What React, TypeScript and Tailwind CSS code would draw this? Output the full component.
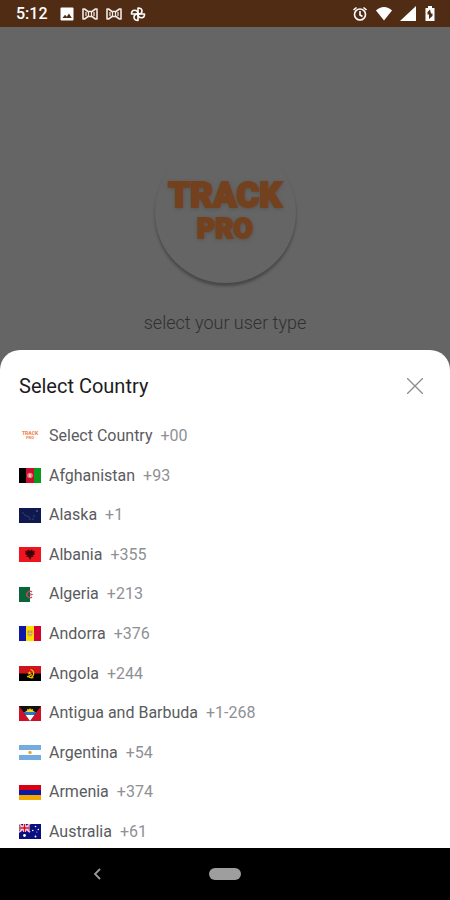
import type { ReactNode } from 'react'

interface Country {
  name: string
  code: string
  flag: ReactNode
}

const countries: Country[] = [
  {
    name: 'Select Country',
    code: '+00',
    flag: (
      <g fontFamily="Roboto, sans-serif" fontWeight="900" fill="#ef8a55" textAnchor="middle">
        <text x="11" y="6" fontSize="5">TRACK</text>
        <text x="11" y="10" fontSize="4">PRO</text>
      </g>
    ),
  },
  {
    name: 'Afghanistan',
    code: '+93',
    flag: (
      <>
        <path fill="#000" d="M0 0h8v15H0z" />
        <path fill="#c8102e" d="M7 0h8v15H7z" />
        <path fill="#0a9a1c" d="M15 0h7v15h-7z" />
        <circle cx="11" cy="7.5" r="2.8" fill="#e77b76" />
        <path d="M10 6h2v3h-2z" fill="#f4c1b8" />
      </>
    ),
  },
  {
    name: 'Alaska',
    code: '+1',
    flag: (
      <>
        <path fill="#10194f" d="M0 0h22v15H0z" />
        <g fill="#7d86a0">
          <circle cx="4" cy="5" r=".5" />
          <circle cx="6" cy="7" r=".5" />
          <circle cx="8" cy="8" r=".5" />
          <circle cx="10" cy="9" r=".5" />
          <circle cx="11" cy="11" r=".5" />
          <circle cx="14" cy="11" r=".5" />
          <circle cx="15" cy="8" r=".5" />
          <circle cx="18" cy="3" r=".8" />
        </g>
      </>
    ),
  },
  {
    name: 'Albania',
    code: '+355',
    flag: (
      <>
        <path fill="#f0141e" d="M0 0h22v15H0z" />
        <path
          fill="#3a0508"
          d="M11 4 9.500 2.500 8 3.500l1.500 1.200L6.500 3.500v4l2 1-1.500 1.500 2.500-.2L11 13l1.500-3.200 2.500.2-1.500-1.500 2-1v-4l-3 1.200L14 3.500l-1.500-1z"
        />
      </>
    ),
  },
  {
    name: 'Algeria',
    code: '+213',
    flag: (
      <>
        <path fill="#fff" d="M0 0h22v15H0z" />
        <path fill="#08663a" d="M0 0h11v15H0z" />
        <path fill="none" stroke="#d7425a" strokeWidth="1.3" d="M13 5a3.200 3.200 0 1 0 0 5" />
        <path fill="#d7425a" d="m14.500 7.500-4-1.500 1 1.500-1 1.500z" />
      </>
    ),
  },
  {
    name: 'Andorra',
    code: '+376',
    flag: (
      <>
        <path fill="#1018a8" d="M0 0h7v15H0z" />
        <path fill="#fedd00" d="M7 0h8v15H7z" />
        <path fill="#d50032" d="M15 0h7v15h-7z" />
        <path fill="#c5954a" d="M8.500 4.500h5v4L11 11 8.500 8.500z" />
        <path stroke="#f0d070" strokeWidth=".7" d="M11 4.500V11M8.500 7.500h5" />
      </>
    ),
  },
  {
    name: 'Angola',
    code: '+244',
    flag: (
      <>
        <path fill="#d0141f" d="M0 0h22v8H0z" />
        <path fill="#000" d="M0 7.500h22V15H0z" />
        <path fill="none" stroke="#f6c700" strokeWidth="1.200" d="M11.500 3.500a4 4 0 0 1 1 7.500M8 11l5-2.500M8.500 10q3 2.500 6 1.500" />
        <path fill="#f6c700" d="m10.500 5 .6 1.400h1.400l-1 1 .4 1.400-1.400-.8-1.400.8.4-1.400-1-1h1.400z" />
      </>
    ),
  },
  {
    name: 'Antigua and Barbuda',
    code: '+1-268',
    flag: (
      <>
        <path fill="#ce1126" d="M0 0h22v15H0z" />
        <path fill="#111" d="M0 0h22L11 15z" />
        <path fill="#fcd116" d="m11 2 1 1.500L14 3l-.2 1.500L16 6H6l2.200-1.500L8 3l2 .5z" />
        <path fill="#2477c5" d="M4.400 6h13.200l-2.200 3H6.600z" />
        <path fill="#fff" d="M6.600 9h8.800L11 15z" />
      </>
    ),
  },
  {
    name: 'Argentina',
    code: '+54',
    flag: (
      <>
        <path fill="#74acdf" d="M0 0h22v15H0z" />
        <path fill="#fff" d="M0 5h22v5H0z" />
        <circle cx="11" cy="7.500" r="1.700" fill="#e7a63d" />
      </>
    ),
  },
  {
    name: 'Armenia',
    code: '+374',
    flag: (
      <>
        <path fill="#d90012" d="M0 0h22v5H0z" />
        <path fill="#0a1aa0" d="M0 5h22v5H0z" />
        <path fill="#f2a800" d="M0 10h22v5H0z" />
      </>
    ),
  },
  {
    name: 'Australia',
    code: '+61',
    flag: (
      <>
        <path fill="#0a0f80" d="M0 0h22v15H0z" />
        <path stroke="#fff" strokeWidth="1.600" d="m0 0 11 8M11 0 0 8" />
        <path stroke="#e4405a" strokeWidth=".6" d="m0 0 11 8M11 0 0 8" />
        <path stroke="#fff" strokeWidth="3" d="M5.500 0v8M0 4h11" />
        <path stroke="#e4002b" strokeWidth="1.600" d="M5.500 0v8M0 4h11" />
        <g fill="#fff">
          <circle cx="5.500" cy="11.500" r="1.400" />
          <circle cx="16.500" cy="2.500" r=".8" />
          <circle cx="13.800" cy="6.500" r=".8" />
          <circle cx="19.300" cy="5.500" r=".8" />
          <circle cx="17.800" cy="8" r=".5" />
          <circle cx="16.500" cy="12.500" r=".9" />
        </g>
      </>
    ),
  },
]

function BowTie() {
  return (
    <svg className="h-4 w-4" viewBox="0 0 16 16" fill="none" stroke="#f1e9e3" strokeWidth="1.600" strokeLinejoin="round">
      <path d="M1 3v10h1.500L6 10.500h4l3.500 2.500H15V3h-1.500L10 5.500H6L2.500 3z" />
      <path d="M4 6v4M12 6v4M6.500 5.500v5M9.500 5.500v5" strokeWidth="1.200" />
    </svg>
  )
}

function Fan() {
  return (
    <svg className="h-4 w-4" viewBox="0 0 16 16" fill="none" stroke="#fff" strokeWidth="1.600" strokeLinejoin="round">
      <path d="M8 8V2c2.500 0 4 1.200 4 3s-1.500 3-4 3z" />
      <path d="M8 8h6.500c0 2.500-1.200 3.800-3 3.800S8 10.500 8 8z" />
      <path d="M8 8v6.500c-2.500 0-4-1.200-4-3.200S5.500 8 8 8z" />
      <path d="M8 8H1.500c0-2.500 1.200-3.800 3-3.800S8 5.500 8 8z" />
    </svg>
  )
}

function StatusBar() {
  return (
    <header className="flex h-[27px] items-center justify-between bg-[#512c15] pl-4 pr-3.5 text-white">
      <div className="flex items-center gap-2">
        <span className="mr-1 text-base leading-5 font-medium">5:12</span>
        <svg className="h-3.5 w-3.5" viewBox="0 0 14 14">
          <path fill="#fff" d="M1.500.5h11a1 1 0 0 1 1 1v11a1 1 0 0 1-1 1h-11a1 1 0 0 1-1-1v-11a1 1 0 0 1 1-1z" />
          <path fill="#512c15" d="m2.500 11 2.500-3.200 1.700 2L9 6.500l2.800 4.500z" />
        </svg>
        <BowTie />
        <BowTie />
        <Fan />
      </div>
      <div className="flex items-center gap-2">
        <svg className="h-4 w-4" viewBox="0 0 16 16" fill="none" stroke="#fff" strokeWidth="1.600">
          <circle cx="8" cy="8.500" r="5.500" />
          <path d="M8 5v4l2.500 1.500M1.500 4 4.500 1.500M14.500 4l-3-2.500" />
        </svg>
        <svg className="h-4 w-4" viewBox="0 0 16 16">
          <path fill="#fff" d="M8 14.500 0 4.500q3.500-3.500 8-3.500t8 3.500z" />
        </svg>
        <svg className="h-4 w-4" viewBox="0 0 16 16">
          <path fill="#fff" d="M16 0v15H0z" />
        </svg>
        <svg className="h-4 w-3" viewBox="0 0 12 16">
          <path fill="#fff" d="M4 0h4v2h2.500v13H1.500V2H4z" />
          <path fill="#512c15" d="M6 3.500 3.500 6v2.500H5V13l3.500-3V7.500H7z" />
        </svg>
      </div>
    </header>
  )
}

function Logo() {
  return (
    <div className="mx-auto mt-[115px] flex h-[141px] w-[141px] flex-col items-center rounded-full pt-9 font-black text-[#74411f] shadow-[0_3px_3px_rgba(0,0,0,0.3)] [-webkit-text-stroke:2px_#74411f] [text-shadow:0_1px_4px_rgba(60,45,35,0.5)]">
      <span className="text-[35px] leading-9">TRACK</span>
      <span className="text-[28px] leading-[30px]">PRO</span>
    </div>
  )
}

export default function App() {
  return (
    <div className="flex min-h-screen flex-col bg-[#656565] font-[Roboto,sans-serif]">
      <StatusBar />

      <main className="flex h-[323px] shrink-0 flex-col">
        <Logo />
        <p className="mt-7 text-center text-lg leading-6 font-light text-[#303030]">select your user type</p>
      </main>

      <section className="flex flex-1 flex-col rounded-t-[20px] bg-white px-[19px] pb-1" aria-labelledby="sheet-title">
        <div className="flex h-[72px] items-center justify-between">
          <h2 id="sheet-title" className="text-xl leading-6 text-[#1c1c1e]">
            Select Country
          </h2>
          <button type="button" aria-label="Close" className="mr-2 text-[#8c8c8c]">
            <svg className="h-4 w-4" viewBox="0 0 16 16" fill="none" stroke="currentColor" strokeWidth="1.300">
              <path d="m0 0 16 16M16 0 0 16" />
            </svg>
          </button>
        </div>
        <ul className="flex flex-1 flex-col justify-between pt-0.5">
          {countries.map((country) => (
            <li key={country.name}>
              <button type="button" className="flex w-full items-center gap-2 text-left text-base leading-6">
                <svg className="h-[15px] w-[22px] shrink-0" viewBox="0 0 22 15">
                  {country.flag}
                </svg>
                <span className="text-[#5a5b60]">{country.name}</span>
                <span className="text-[#8f9095]">{country.code}</span>
              </button>
            </li>
          ))}
        </ul>
      </section>

      <nav className="grid h-[52px] grid-cols-[1fr_auto_1fr] items-center bg-black">
        <div className="flex justify-center pr-4">
          <button type="button" aria-label="Back">
            <svg className="h-3 w-2" viewBox="0 0 8 12" fill="none" stroke="#9a9a9a" strokeWidth="1.800">
              <path d="M7 1 2 6l5 5" />
            </svg>
          </button>
        </div>
        <button type="button" aria-label="Home" className="h-3 w-8 rounded-full bg-[#9e9e9e]" />
      </nav>
    </div>
  )
}
